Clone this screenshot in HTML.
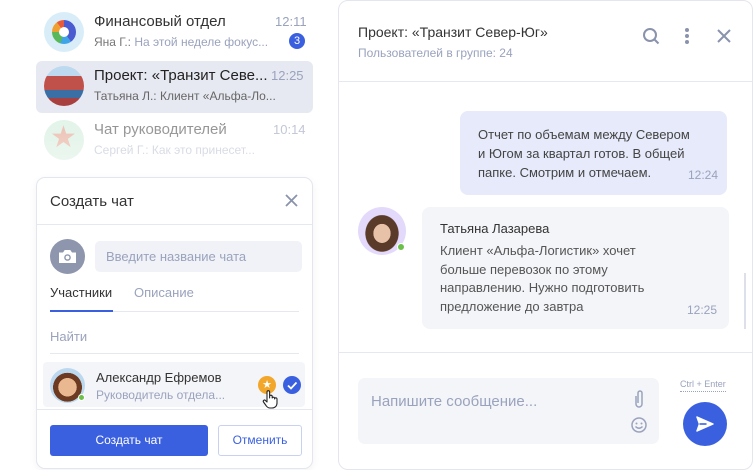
<!DOCTYPE html>
<html><head><meta charset="utf-8"><style>
*{box-sizing:border-box;margin:0;padding:0}
body{width:753px;height:470px;background:#fff;font-family:"Liberation Sans",sans-serif;position:relative;overflow:hidden;color:#333}
.abs{position:absolute}
.av{position:absolute;border-radius:50%}
.name{font-size:15px;color:#333}
.sub{font-size:12px;color:#9aa3bd}
.time{font-size:13px;color:#9aa3bd}
</style></head><body>
<div class="abs" style="left:36px;top:61px;width:277px;height:52px;background:#e7e9f2;border-radius:6px"></div>
<div class="av" style="left:44px;top:12px;width:40px;height:40px;background:#d8edf8"></div>
<div class="av" style="left:52px;top:20px;width:24px;height:24px;background:conic-gradient(#4b5bd0 0 40%,#3fa4e6 40% 55%,#59b95a 55% 75%,#f0a030 75% 90%,#e85a3c 90%)"></div>
<div class="av" style="left:59px;top:27px;width:10px;height:10px;background:#fff"></div>
<div class="abs name" style="left:94px;top:13px">Финансовый отдел</div>
<div class="abs time" style="left:275px;top:14px">12:11</div>
<div class="abs sub" style="left:94px;top:35px"><span style="color:#777">Яна Г.:</span> На этой неделе фокус...</div>
<div class="av" style="left:289px;top:33px;width:16px;height:16px;background:#3a60e0;color:#fff;font-size:11px;text-align:center;line-height:16px">3</div>

<div class="av" style="left:44px;top:66px;width:40px;height:40px;background:linear-gradient(#bcd9ef 0 25%,#c0504a 25% 60%,#3a6fa6 60% 80%,#a84040 80%)"></div>
<div class="abs name" style="left:94px;top:67px;color:#222">Проект: «Транзит Севе...</div>
<div class="abs time" style="left:271px;top:68px">12:25</div>
<div class="abs sub" style="left:94px;top:89px;color:#666">Татьяна Л.: Клиент «Альфа-Ло...</div>

<div class="av" style="left:44px;top:120px;width:40px;height:40px;background:#dcf1e4"></div>
<div class="abs" style="left:50px;top:120px;font-size:30px;color:#e8b4a4">★</div>
<div class="abs name" style="left:94px;top:121px;color:#777">Чат руководителей</div>
<div class="abs time" style="left:273px;top:122px;color:#b0b6c8">10:14</div>
<div class="abs sub" style="left:94px;top:143px;color:#c3c8d6">Сергей Г.: Как это принесет...</div>
<div class="abs" style="left:28px;top:115px;width:295px;height:60px;background:linear-gradient(rgba(255,255,255,.15),rgba(255,255,255,.5))"></div>

<div class="abs" style="left:36px;top:177px;width:277px;height:292px;border:1px solid #e3e6ee;border-radius:9px;background:#fff;box-shadow:0 2px 8px rgba(0,0,0,.05)"></div>
<div class="abs" style="left:50px;top:193px;font-size:15px;color:#333">Создать чат</div>
<svg class="abs" style="left:285px;top:194px" width="13" height="13"><path d="M1 1l11 11M12 1L1 12" stroke="#8a93ac" stroke-width="1.8"/></svg>
<div class="abs" style="left:37px;top:224px;width:275px;height:1px;background:#e6e8ef"></div>
<div class="av" style="left:50px;top:239px;width:35px;height:35px;background:#8e96ae"></div>
<svg class="abs" style="left:57px;top:246px" width="21" height="21" viewBox="0 0 21 21"><path d="M2 6.5h4l1.7-2.5h5.6L15 6.5h4V17H2z" fill="#fff" rx="2"/><circle cx="10.5" cy="11.5" r="3.3" fill="#8e96ae"/><circle cx="10.5" cy="11.5" r="1.9" fill="#fff"/></svg>
<div class="abs" style="left:95px;top:241px;width:207px;height:31px;background:#f1f2f7;border-radius:5px;font-size:13px;color:#9aa3bd;padding:8px 11px">Введите название чата</div>
<div class="abs" style="left:50px;top:285px;font-size:13px;color:#333">Участники</div>
<div class="abs" style="left:134px;top:285px;font-size:13px;color:#9aa3bd">Описание</div>
<div class="abs" style="left:50px;top:311px;width:249px;height:1px;background:#e6e8ef"></div>
<div class="abs" style="left:50px;top:310px;width:63px;height:2px;background:#3a60e0"></div>
<div class="abs" style="left:50px;top:329px;font-size:13px;color:#9aa3bd">Найти</div>
<div class="abs" style="left:50px;top:353px;width:249px;height:1px;background:#e6e8ef"></div>
<div class="abs" style="left:43px;top:362px;width:262px;height:45px;background:#f4f5f9;border-radius:4px"></div>
<div class="av" style="left:50px;top:368px;width:35px;height:35px;background:radial-gradient(circle at 50% 55%,#e9b890 0 35%,#6b3a20 36% 55%,#bcd8ef 56%)"></div>
<div class="av" style="left:78px;top:394px;width:7px;height:7px;background:#6bc04a;border:1px solid #fff"></div>
<div class="abs" style="left:96px;top:370px;font-size:13px;color:#333">Александр Ефремов</div>
<div class="abs" style="left:96px;top:388px;font-size:12px;color:#9aa3bd">Руководитель отдела...</div>
<div class="av" style="left:258px;top:376px;width:18px;height:18px;background:#f2a62a;color:#fff;font-size:11px;text-align:center;line-height:18px">★</div>
<svg class="abs" style="left:262px;top:389px" width="16" height="20" viewBox="0 0 16 20"><path d="M5 10V3a1.3 1.3 0 012.6 0v6V7.5a1.3 1.3 0 012.6 0V9a1.3 1.3 0 012.4 0v1a1.2 1.2 0 012.4 0v4c0 3-2 5-5 5H8c-2 0-3-1-4-2.5L1.5 13a1.2 1.2 0 012-1.4L5 13z" fill="#fff" stroke="#222" stroke-width="1.1" stroke-linejoin="round"/></svg>
<div class="av" style="left:283px;top:376px;width:18px;height:18px;background:#3a60e0"></div>
<svg class="abs" style="left:283px;top:376px" width="18" height="18"><path d="M5 9.5l3 3 5.5-6" fill="none" stroke="#fff" stroke-width="1.8"/></svg>
<div class="abs" style="left:37px;top:409px;width:275px;height:1px;background:#e6e8ef"></div>
<div class="abs" style="left:50px;top:425px;width:158px;height:31px;background:#3a60e0;border-radius:3px;color:#fff;font-size:12px;text-align:center;line-height:31px">Создать чат</div>
<div class="abs" style="left:218px;top:425px;width:84px;height:31px;border:1px solid #c8d2f0;border-radius:3px;color:#3a60e0;font-size:12px;text-align:center;line-height:29px">Отменить</div>

<div class="abs" style="left:338px;top:0;width:415px;height:470px;border:1px solid #e3e6ee;border-radius:10px;background:#fff"></div>
<div class="abs" style="left:358px;top:24px;font-size:14px;color:#333">Проект: «Транзит Север-Юг»</div>
<div class="abs" style="left:358px;top:46px;font-size:12px;color:#9aa3bd">Пользователей в группе: 24</div>
<svg class="abs" style="left:642px;top:27px" width="19" height="19"><circle cx="8" cy="8" r="6" fill="none" stroke="#8a93ac" stroke-width="2"/><path d="M12.5 12.5l4 4" stroke="#8a93ac" stroke-width="2"/></svg>
<svg class="abs" style="left:683px;top:27px" width="8" height="19"><circle cx="4" cy="3" r="2" fill="#8a93ac"/><circle cx="4" cy="9" r="2" fill="#8a93ac"/><circle cx="4" cy="15" r="2" fill="#8a93ac"/></svg>
<svg class="abs" style="left:716px;top:28px" width="16" height="16"><path d="M2 2l12 12M14 2L2 14" stroke="#8a93ac" stroke-width="2"/></svg>
<div class="abs" style="left:339px;top:81px;width:413px;height:1px;background:#e6e8ef"></div>

<div class="abs" style="left:460px;top:111px;width:267px;height:84px;background:#e6eafa;border-radius:8px"></div>
<div class="abs" style="left:478px;top:125px;font-size:13px;line-height:19px;color:#444">Отчет по объемам между Севером<br>и Югом за квартал готов. В общей<br>папке. Смотрим и отмечаем.</div>
<div class="abs" style="left:688px;top:168px;font-size:12px;color:#9aa3bd">12:24</div>

<div class="av" style="left:358px;top:207px;width:48px;height:48px;background:radial-gradient(ellipse at 50% 55%,#e8c2a8 0 25%,#5a3a28 26% 48%,#e3d9fb 50%)"></div>
<div class="av" style="left:397px;top:243px;width:8px;height:8px;background:#6bc04a;border:1px solid #fff"></div>
<div class="abs" style="left:422px;top:207px;width:307px;height:122px;background:#f4f5f9;border-radius:8px"></div>
<div class="abs" style="left:440px;top:221px;font-size:13px;color:#333">Татьяна Лазарева</div>
<div class="abs" style="left:440px;top:242px;font-size:13px;line-height:18.5px;color:#555">Клиент «Альфа-Логистик» хочет<br>больше перевозок по этому<br>направлению. Нужно подготовить<br>предложение до завтра</div>
<div class="abs" style="left:687px;top:303px;font-size:12px;color:#9aa3bd">12:25</div>
<div class="abs" style="left:744px;top:273px;width:2px;height:56px;background:#dde0e8"></div>
<div class="abs" style="left:339px;top:352px;width:413px;height:1px;background:#e6e8ef"></div>

<div class="abs" style="left:358px;top:378px;width:301px;height:66px;background:#f4f5f9;border-radius:7px"></div>
<div class="abs" style="left:371px;top:393px;font-size:15px;color:#9aa3bd">Напишите сообщение...</div>
<svg class="abs" style="left:632px;top:388px" width="14" height="22"><path d="M4 8v8a3 3 0 006 0V5a2 2 0 00-4 0v10" fill="none" stroke="#9aa3bd" stroke-width="1.5"/></svg>
<svg class="abs" style="left:630px;top:416px" width="18" height="18"><circle cx="9" cy="9" r="7" fill="none" stroke="#9aa3bd" stroke-width="1.5"/><circle cx="6.5" cy="7.5" r="1" fill="#9aa3bd"/><circle cx="11.5" cy="7.5" r="1" fill="#9aa3bd"/><path d="M5.5 10.5q3.5 3.5 7 0" fill="none" stroke="#9aa3bd" stroke-width="1.4"/></svg>
<div class="abs" style="left:680px;top:379px;font-size:9px;color:#9aa3bd;border-bottom:1px dotted #9aa3bd;padding-bottom:2px">Ctrl + Enter</div>
<div class="av" style="left:683px;top:402px;width:44px;height:44px;background:#3a60e0"></div>
<svg class="abs" style="left:694px;top:413px" width="22" height="22" viewBox="0 0 22 22"><path d="M3 4l16 7-16 7 2.5-7z" fill="#fff" stroke="#fff" stroke-width="1.5" stroke-linejoin="round"/><path d="M5.5 11h7" stroke="#3a60e0" stroke-width="1.6"/></svg>
</body></html>
